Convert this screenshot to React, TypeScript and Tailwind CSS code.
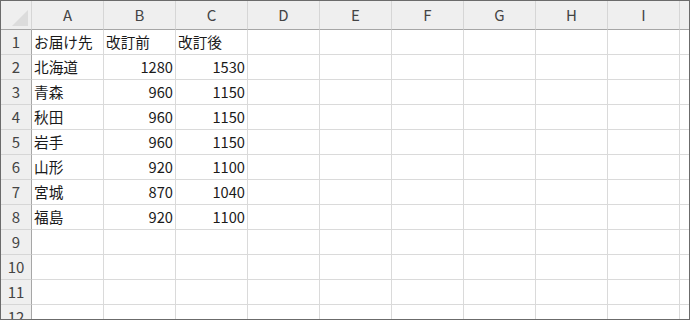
import React from 'react';

const cols = ['A', 'B', 'C', 'D', 'E', 'F', 'G', 'H', 'I', ''];

const rows: (string | number)[][] = [
  ['お届け先', '改訂前', '改訂後'],
  ['北海道', 1280, 1530],
  ['青森', 960, 1150],
  ['秋田', 960, 1150],
  ['岩手', 960, 1150],
  ['山形', 920, 1100],
  ['宮城', 870, 1040],
  ['福島', 920, 1100],
  [],
  [],
  [],
  [],
];

const font = { fontFamily: '"Noto Sans CJK JP", "Noto Sans", sans-serif' };

export default function App() {
  return (
    <div className="w-[690px] h-[320px] bg-white">
      <div
        className="w-[690px] h-[320px] border border-[#6b6b6b] overflow-hidden"
        style={font}
      >
        <div className="grid grid-cols-[31px_repeat(10,72px)] grid-rows-[29px_repeat(12,25px)]">
          {/* corner */}
          <div className="bg-[#efefef] border-r border-b border-r-[#d6d6d6] border-b-[#a6a6a6] flex items-end justify-end pr-[3px] pb-[3px]">
            <svg width="16" height="16" viewBox="0 0 16 16">
              <polygon points="16,0 16,16 0,16" fill="#dcdcdc" />
            </svg>
          </div>
          {cols.map((c, k) => (
            <div
              key={k}
              className="bg-[#efefef] border-r border-b border-r-[#d6d6d6] border-b-[#a6a6a6] flex items-center justify-center text-[15px] text-[#444]"
            >
              {c}
            </div>
          ))}

          {rows.map((r, i) => (
            <React.Fragment key={i}>
              <div className="bg-[#efefef] border-r border-b border-r-[#a6a6a6] border-b-[#d6d6d6] flex items-center justify-center text-[15px] text-[#444]">
                {i + 1}
              </div>
              {cols.map((c, j) => {
                const v = r[j];
                const num = typeof v === 'number';
                return (
                  <div
                    key={j}
                    className={`border-r border-b border-[#dadada] flex items-center text-[14.67px] text-[#1a1a1a] whitespace-nowrap overflow-hidden ${
                      num ? 'justify-end pr-[2px]' : 'justify-start pl-[2px]'
                    }`}
                  >
                    {v}
                  </div>
                );
              })}
            </React.Fragment>
          ))}
        </div>
      </div>
    </div>
  );
}
